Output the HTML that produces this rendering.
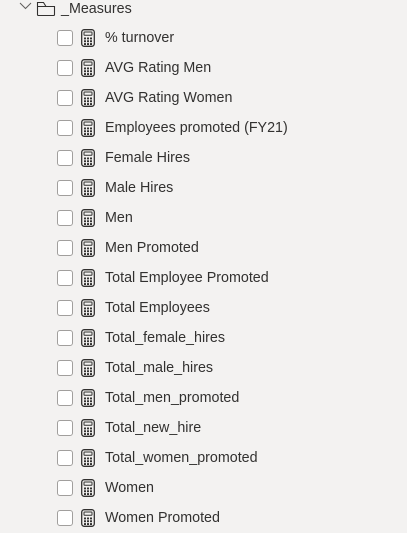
<!DOCTYPE html>
<html><head><style>
body{margin:0;width:407px;height:532px;background:#f3f2f1;font-family:"Liberation Sans",sans-serif;color:#323130;overflow:hidden;position:relative}
.h{position:absolute;top:0;left:0}
.r{position:absolute;left:0;height:30px;width:407px}
.cb{position:absolute;left:57px;top:7px;width:14px;height:14px;border:1px solid #a19f9d;border-radius:3px;background:#fff}
.ic{position:absolute;left:81px;top:6px}
.t{position:absolute;left:105px;top:7px;font-size:14.3px;line-height:17px;white-space:nowrap}
</style></head><body>
<svg class="h" width="60" height="18" style="position:absolute;left:0;top:0">
<path d="M20 3 L25.5 8.5 L31 3" fill="none" stroke="#605e5c" stroke-width="1"/>
<path d="M37.5 2.5 V14.5 Q37.5 15.5 38.5 15.5 H53.5 Q54.5 15.5 54.5 14.5 V6.5 H46 L43.5 2.5 Z M37.5 6.5 H46" fill="none" stroke="#323130" stroke-width="1.1"/>
</svg>
<div style="position:absolute;left:61px;top:1px;font-size:14.3px;line-height:16px">_Measures</div>
<div id="list"></div>
<script>
var items=["% turnover","AVG Rating Men","AVG Rating Women","Employees promoted (FY21)","Female Hires","Male Hires","Men","Men Promoted","Total Employee Promoted","Total Employees","Total_female_hires","Total_male_hires","Total_men_promoted","Total_new_hire","Total_women_promoted","Women","Women Promoted"];
var h="";
items.forEach(function(s,i){
h+='<div class="r" style="top:'+(23+i*30)+'px"><div class="cb"></div><svg class="ic" width="14" height="18" viewBox="0 0 14 18"><rect x="0.7" y="0.7" width="12.6" height="16.6" rx="2.5" fill="none" stroke="#323130" stroke-width="1.3"/><rect x="3" y="3" width="8" height="3.2" rx="0.5" fill="none" stroke="#323130" stroke-width="1"/>'
+[0,1,2].map(function(r){return [0,1,2].map(function(c){return '<rect x="'+(3+c*3)+'" y="'+(8.5+r*2.8)+'" width="2" height="1.9" fill="#323130"/>'}).join('')}).join('')
+'</svg><div class="t">'+s+'</div></div>';
});
document.getElementById('list').innerHTML=h;
</script>
</body></html>
